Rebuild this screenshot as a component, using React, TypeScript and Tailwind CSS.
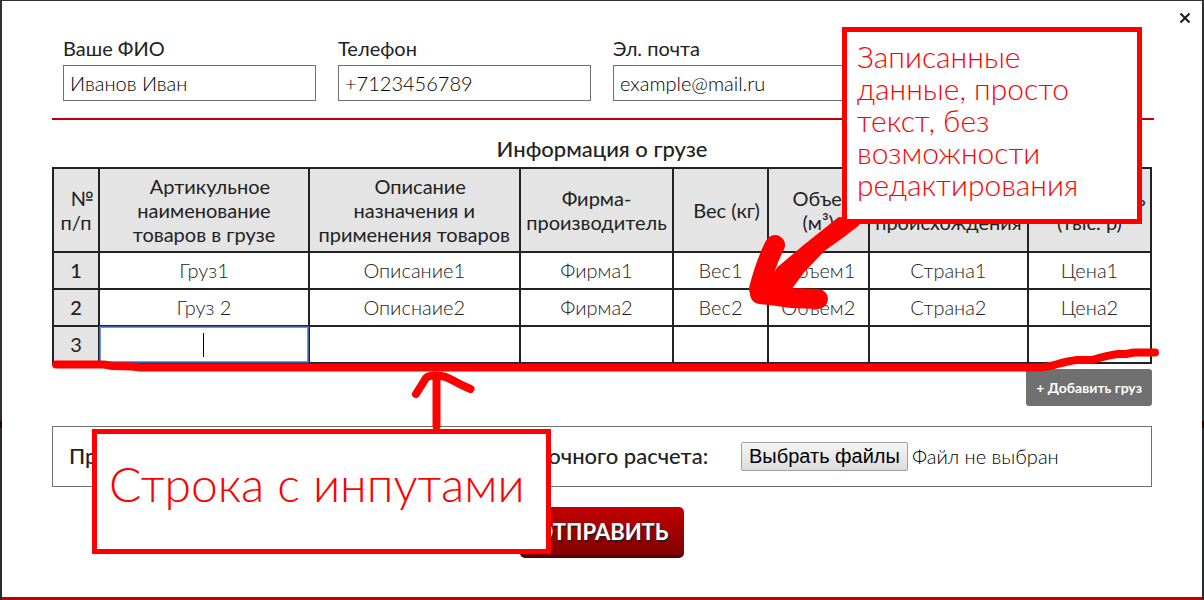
import React from "react";

const fields = [
  { id: "name", label: "Ваше ФИО", type: "text", value: "Иванов Иван" },
  { id: "phone", label: "Телефон", type: "tel", value: "+7123456789" },
  { id: "email", label: "Эл. почта", type: "email", value: "example@mail.ru" },
];

const columns: { title: React.ReactNode; name: string; width: string }[] = [
  { title: <>№ п/п</>, name: "Номер", width: "w-[4.2%] indent-3" },
  { title: <>Артикульное наименование товаров в грузе</>, name: "Наименование", width: "w-[19.1%] indent-3" },
  { title: <>Описание назначения и применения товаров</>, name: "Описание", width: "w-[19.2%] indent-3" },
  { title: <>Фирма-<br />производитель</>, name: "Фирма", width: "w-[14%]" },
  { title: <>Вес (кг)</>, name: "Вес", width: "w-[8.6%] indent-3" },
  { title: <>Объем (м³)</>, name: "Объем", width: "w-[9.2%] indent-3" },
  { title: <>Страна происхождения</>, name: "Страна", width: "w-[14.5%] indent-3" },
  { title: <>Стоимость (тыс. р)</>, name: "Стоимость", width: "w-[11.2%] indent-3" },
];

const rows = [
  ["Груз1", "Описание1", "Фирма1", "Вес1", "Объем1", "Страна1", "Цена1"],
  ["Груз 2", "Описнаие2", "Фирма2", "Вес2", "Объем2", "Страна2", "Цена2"],
];

function ContactFields() {
  return (
    <div className="-mr-0.5 grid grid-cols-4 border-b-2 border-[#c00000] pr-0.5 pb-[17px]">
      {fields.map((f) => (
        <div key={f.id} className="flex flex-col px-[11px]">
          <label htmlFor={f.id} className="pb-0.5 text-xl leading-[30px]">{f.label}</label>
          <input
            id={f.id}
            type={f.type}
            defaultValue={f.value}
            className="h-9 w-full border border-[#707070] bg-white px-1.5 text-xl font-light text-black outline-none"
          />
        </div>
      ))}
    </div>
  );
}

function CargoTable() {
  return (
    <table className="w-full table-fixed border-collapse text-center text-xl leading-6">
      <caption className="pt-[15px] pb-1 text-[22px] leading-7 font-medium">Информация о грузе</caption>
      <thead>
        <tr className="h-[84px] bg-[#e4e4e4]">
          {columns.map((c) => (
            <th key={c.name} className={"border-2 border-[#222] px-1 font-normal " + c.width}>{c.title}</th>
          ))}
        </tr>
      </thead>
      <tbody>
        {rows.map((row, i) => (
          <tr key={i} className="h-[37px]">
            <th className="border-2 border-[#222] bg-[#e4e4e4] pb-0.5 font-medium">{i + 1}</th>
            {row.map((cell) => (
              <td key={cell} className="border-2 border-[#222] pb-0.5 font-light">{cell}</td>
            ))}
          </tr>
        ))}
        <tr className="h-[37px]">
          <th className="border-2 border-[#222] bg-[#e4e4e4] pb-0.5 font-normal">3</th>
          {columns.slice(1).map((c, i) => (
            <td key={c.name} className="border-2 border-[#222] p-0">
              <div className={i === 0 ? "relative flex h-[35px] items-center justify-center border border-[#6b93e8] ring-1 ring-[#3c5ea8]" : "flex h-[35px] items-center"}>
                <input
                  type="text"
                  aria-label={c.name}
                  className={i === 0 ? "h-6 w-full bg-[linear-gradient(#000,#000)] bg-[length:1px_24px] bg-center bg-no-repeat text-center font-light outline-none" : "h-6 w-full text-center font-light outline-none"}
                />
              </div>
            </td>
          ))}
        </tr>
      </tbody>
    </table>
  );
}

function Annotations() {
  return (
    <div className="pointer-events-none absolute top-0 left-0 h-[600px] w-[1204px] font-['Lato',sans-serif] text-[#ff0000]">
      <svg viewBox="0 0 1204 600" className="absolute inset-0" fill="none" stroke="#ff0000" strokeLinecap="round" strokeLinejoin="round" aria-hidden="true">
        <path strokeWidth="8" d="M56 364.500H104L112 366L132 366.500L140 367.500H1040C1052 367 1060 362 1077 360H1092C1102 357 1110 355 1118 354H1126L1134 352.500H1155" />
        <path strokeWidth="8" d="M436.500 426V376M416 394L426 378Q429 375 437 375.500Q446 376 454 381Q461 385 470.500 389" />
        <path strokeWidth="20" d="M775 245Q766 262 759 289" />
        <path strokeWidth="20" d="M760 294L778 296L792 298L818 299" />
        <path fill="#ff0000" strokeWidth="2" d="M839 218L804 246L778 268L770 280L760 302L783 303L792 287L804 271L824 250L841 238L858 225L860 220Z" />
      </svg>
      <div className="absolute top-[27px] left-[842px] h-[197px] w-[300px] border-5 border-[#ff0000] bg-white px-2.5 pt-2 text-[30px] leading-8 font-light">
        Записанные<br />данные, просто<br />текст, без<br />возможности<br />редактирования
      </div>
      <div className="absolute top-[429px] left-[92px] flex h-[125px] w-[459px] items-center border-5 border-[#ff0000] bg-white px-3 pb-4 text-5xl leading-none font-light">
        Строка с инпутами
      </div>
    </div>
  );
}

export default function App() {
  return (
    <div className="relative flex min-h-screen flex-col bg-[linear-gradient(#303032_421px,#300000_421px,#300000_428px,#2a2c2d_428px)] px-0.5 pt-px font-['Lato',sans-serif] text-[#222]">
      <main className="relative flex grow flex-col border-b-3 border-[#c00000] bg-white px-[50px] pt-8 pb-9">
        <button type="button" aria-label="Закрыть" className="absolute top-[9px] right-[9px] flex size-4 items-center justify-center">
          <svg viewBox="0 0 12 12" className="size-3" fill="none" stroke="#222" strokeWidth="2.200" aria-hidden="true">
            <path d="M1.500 1.500L10.500 10.500M10.500 1.500L1.500 10.500" />
          </svg>
        </button>
        <ContactFields />
        <CargoTable />
        <button type="button" className="mt-[5px] h-[37px] self-end rounded-[3px] bg-[#707070] px-2.5 text-sm font-bold text-white">
          + Добавить груз
        </button>
        <div className="mt-5 flex h-[61px] items-center border border-[#707070] px-4">
          <span className="w-[672px] pb-0.5 text-[22px] font-medium whitespace-nowrap">Прикрепите документы и рисунки для более точного расчета:</span>
          <input id="files" type="file" multiple className="sr-only" />
          <label htmlFor="files" className="flex items-center gap-1 text-xl font-light whitespace-nowrap text-black">
            <span className="rounded-xs border border-[#a0a0a0] bg-linear-to-b from-[#f6f6f6] to-[#dcdcdc] px-[7px] font-['Liberation_Sans',sans-serif] leading-[27px] font-normal">Выбрать файлы</span>
            <span className="pb-0.5">Файл не выбран</span>
          </label>
        </div>
        <button type="submit" className="mt-5 h-[51px] self-center rounded-[5px] border-b-3 border-[#500000] bg-linear-to-b from-[#c40000] to-[#800000] px-4 text-[22px] font-bold text-white text-shadow-[1px_2px_1px_#222]">
          ОТПРАВИТЬ
        </button>
      </main>
      <Annotations />
    </div>
  );
}
